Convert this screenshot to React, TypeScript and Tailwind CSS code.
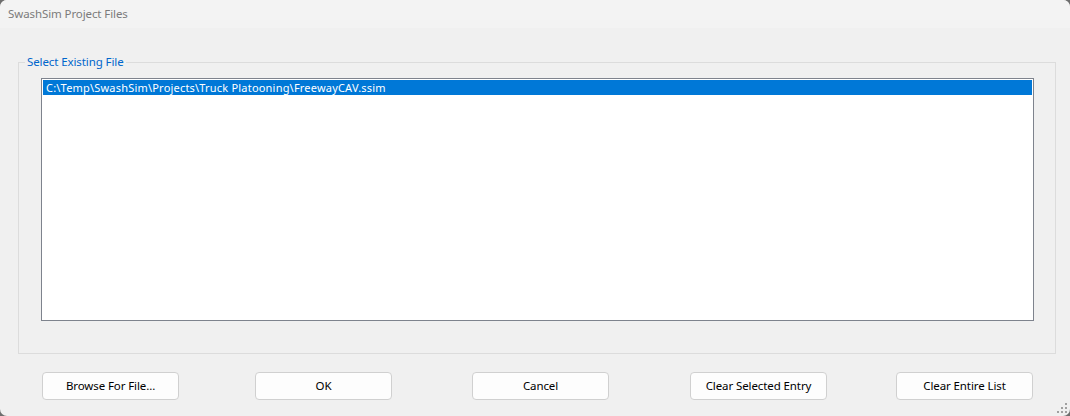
import React from "react";

const buttons = [
  { label: "Browse For File...", gap: "ml-[42px]" },
  { label: "OK", gap: "ml-[76px]" },
  { label: "Cancel", gap: "ml-[80px]" },
  { label: "Clear Selected Entry", gap: "ml-[81px]" },
  { label: "Clear Entire List", gap: "ml-[69px]" },
];

function ResizeGrip() {
  const dots = [
    [8, 0],
    [4, 4],
    [8, 4],
    [0, 8],
    [4, 8],
    [8, 8],
  ];
  return (
    <svg width="11" height="11" viewBox="0 0 11 11" className="absolute right-[2px] bottom-[2px]">
      {dots.map(([x, y], i) => (
        <rect key={i} x={x} y={y} width="2" height="2" fill="#a0a0a0" />
      ))}
    </svg>
  );
}

export default function App() {
  return (
    <div
      className="w-[1070px] h-[416px] bg-[#6e6e6e] overflow-hidden"
      style={{ fontFamily: '"Noto Sans", "Liberation Sans", sans-serif' }}
    >
      <div className="relative flex flex-col w-full h-full bg-[#f0f0f0] rounded-[7px] overflow-hidden">
        {/* title bar */}
        <div className="h-[28px] shrink-0 bg-[#f3f3f3] flex items-center pl-[8px] text-[11.5px] tracking-[-0.1px] text-[#7b7b7b]">
          SwashSim Project Files
        </div>

        {/* group box */}
        <div className="relative mt-[34px] ml-[18px] w-[1038px] h-[292px] border border-[#dcdcdc]">
          <span className="absolute left-[6px] -top-[10px] px-[2px] bg-[#f0f0f0] text-[11.5px] tracking-[-0.1px] leading-[18px] text-[#0066cc]">
            Select Existing File
          </span>
          <div className="mt-[15px] ml-[22px] w-[993px] h-[243px] border border-[#7e838d] bg-white p-[1px]">
            <div className="h-[15px] bg-[#0078d7] text-white text-[11px] tracking-[0.2px] leading-[15px] pl-[3px] whitespace-nowrap">
              C:\Temp\SwashSim\Projects\Truck Platooning\FreewayCAV.ssim
            </div>
          </div>
        </div>

        {/* buttons */}
        <div className="flex mt-[18px]">
          {buttons.map((b) => (
            <button
              key={b.label}
              className={`${b.gap} w-[137px] h-[28px] rounded-[4px] border border-[#d0d0d0] bg-[#fdfdfd] text-[11.5px] tracking-[-0.1px] text-black`}
            >
              {b.label}
            </button>
          ))}
        </div>

        <ResizeGrip />
      </div>
    </div>
  );
}
